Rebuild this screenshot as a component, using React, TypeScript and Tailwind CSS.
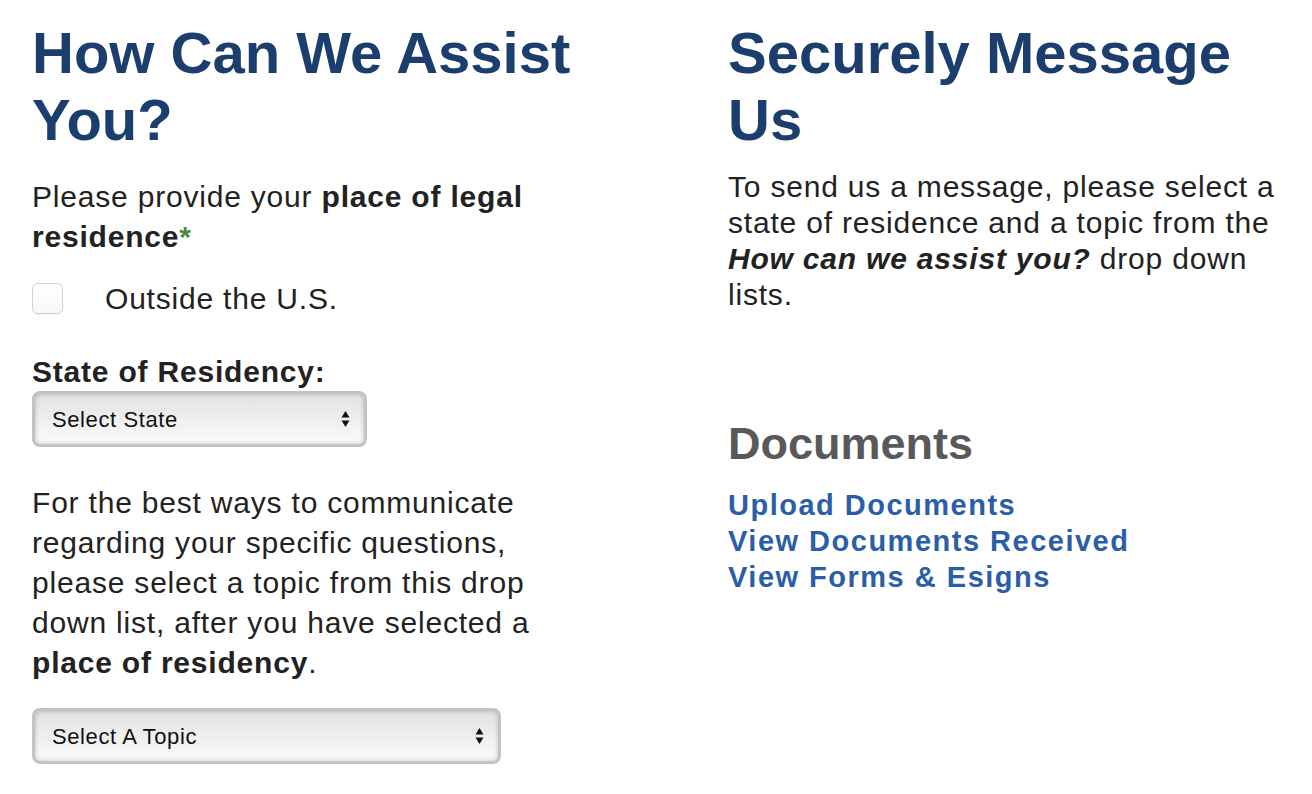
import React from "react";

function SelectBox({ label, width }: { label: string; width: string }) {
  return (
    <div
      className={`${width} h-[56px] flex items-center justify-between rounded-[8px] border-[3px] border-[#c3c3c3] bg-gradient-to-b from-[#e2e2e2] to-[#fbfbfb] shadow-[inset_0_0_5px_rgba(0,0,0,0.22)] pl-[17px] pr-[14px]`}
    >
      <span className="text-[22px] tracking-[0.6px] text-[#111]">{label}</span>
      <svg width="9" height="18" viewBox="0 0 9 18" className="block">
        <polygon points="0.5,7.5 4.5,1 8.5,7.5" fill="#111" />
        <polygon points="0.5,10.5 8.5,10.5 4.5,17" fill="#111" />
      </svg>
    </div>
  );
}

export default function App() {
  return (
    <div className="w-[1312px] h-[794px] overflow-hidden bg-white font-['Liberation_Sans',Arial,sans-serif] flex pl-[32px] pt-[19px] gap-[136px]">
      {/* Left column */}
      <div className="w-[560px] shrink-0">
        <h1 className="m-0 text-[58px] leading-[67px] font-bold text-[#1b3e6e]">
          How Can We Assist You?
        </h1>
        <p className="mt-[24px] text-[30px] leading-[40px] tracking-[0.8px] text-[#222]">
          Please provide your <b>place of legal residence</b>
          <b className="text-[#4b8b3b]">*</b>
        </p>
        <div className="mt-[26px] h-[31px] flex items-center">
          <div className="w-[31px] h-[31px] rounded-[6px] border border-[#d2d2d2] bg-gradient-to-b from-white to-[#f8f8f8] shadow-[0_1px_1px_rgba(0,0,0,0.05)]" />
          <span className="ml-[42px] text-[30px] leading-none tracking-[0.8px] text-[#222]">
            Outside the U.S.
          </span>
        </div>
        <div className="mt-[40px] text-[30px] leading-[36px] font-bold tracking-[0.8px] text-[#222]">
          State of Residency:
        </div>
        <div className="mt-px">
          <SelectBox label="Select State" width="w-[335px]" />
        </div>
        <p className="mt-[36px] text-[30px] leading-[40px] tracking-[0.8px] text-[#222]">
          For the best ways to communicate regarding your specific questions, please select a topic
          from this drop down list, after you have selected a <b>place of residency</b>.
        </p>
        <div className="mt-[25px]">
          <SelectBox label="Select A Topic" width="w-[469px]" />
        </div>
      </div>

      {/* Right column */}
      <div className="w-[580px] shrink-0">
        <h1 className="m-0 text-[58px] leading-[67px] font-bold text-[#1b3e6e]">
          Securely Message Us
        </h1>
        <p className="mt-[16px] text-[30px] leading-[36px] tracking-[0.8px] text-[#222]">
          To send us a message, please select a state of residence and a topic from the{" "}
          <b className="italic">How can we assist you?</b> drop down lists.
        </p>
        <h2 className="mt-[105px] text-[45px] leading-[52px] font-bold text-[#58595b]">
          Documents
        </h2>
        <div className="mt-[17px] flex flex-col text-[29px] leading-[36px] font-bold tracking-[1.5px] text-[#2a5ea8]">
          <a href="#" className="self-start">Upload Documents</a>
          <a href="#" className="self-start">View Documents Received</a>
          <a href="#" className="self-start">View Forms &amp; Esigns</a>
        </div>
      </div>
    </div>
  );
}
